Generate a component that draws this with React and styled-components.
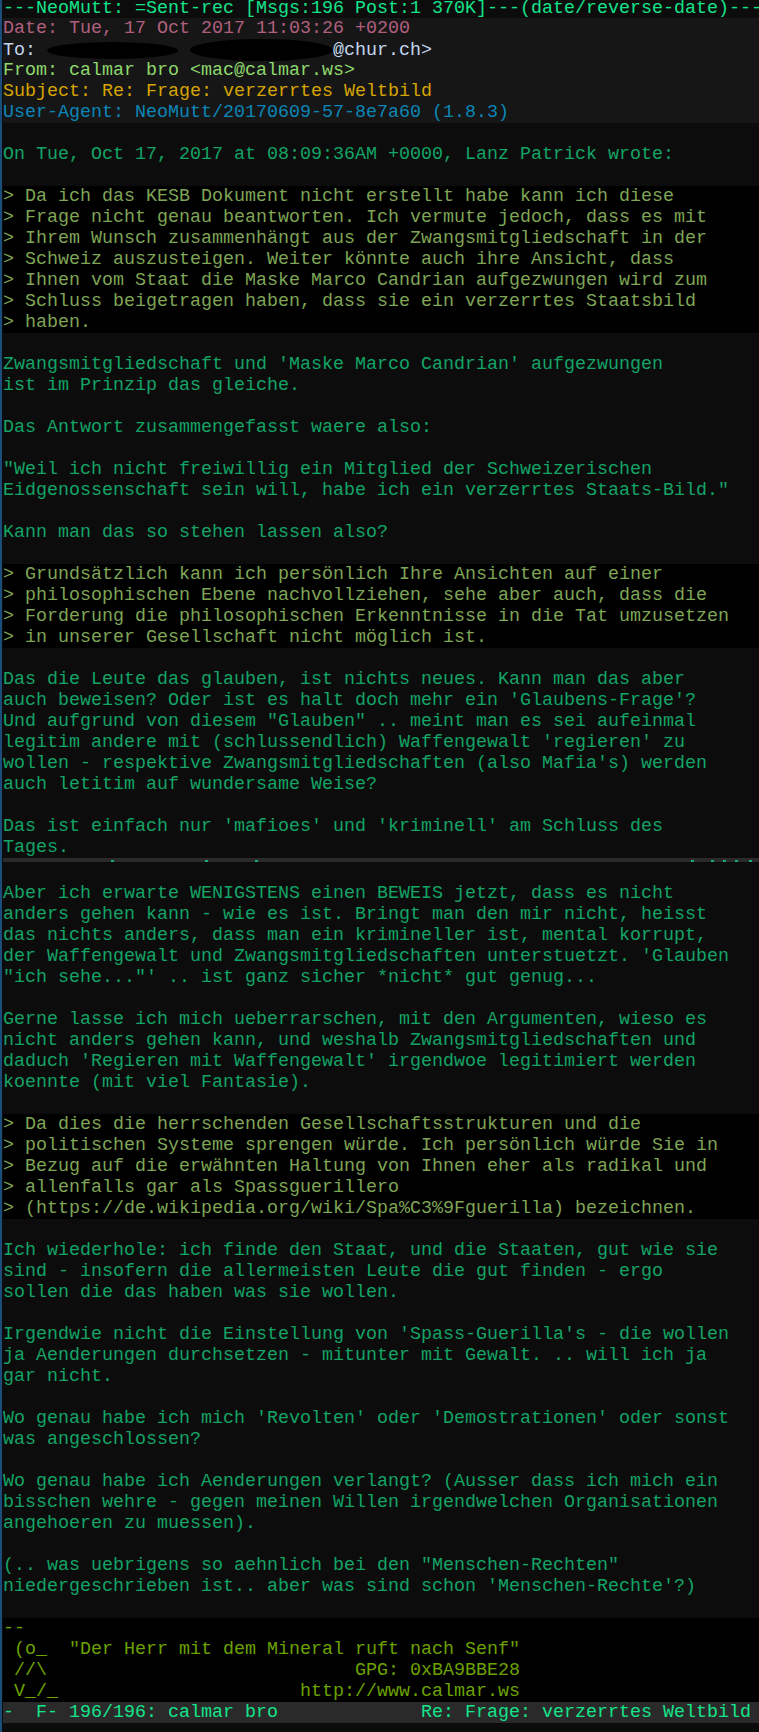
import React from 'react'
import styled, { createGlobalStyle } from 'styled-components'

const Global = createGlobalStyle`
  html, body {
    margin: 0;
    padding: 0;
    background: #0c0c0c;
  }
`

const tones = {
  bar: '#14e38a',
  date: '#b0607e',
  to: '#c2d6ee',
  from: '#8fd86c',
  subject: '#d6a400',
  agent: '#0b86b6',
  body: '#13a466',
  quote: '#7fa556',
  sig: '#6ca200',
}

const Screen = styled.div`
  width: 759px;
  height: 1732px;
  box-sizing: border-box;
  overflow: hidden;
  border-left: 2px solid #1b4c7a;
  padding-left: 1px;
  background: #0c0c0c;
  font-family: "Liberation Mono", "DejaVu Sans Mono", monospace;
  font-size: 18.33px;
  line-height: 21px;
`

const Line = styled.div`
  height: 21px;
  white-space: pre;
  color: ${p => tones[p.$tone]};
`

// first row of the terminal is cropped a little at the top
const TopBar = styled(Line)`
  height: 18px;
  line-height: 17px;
`

const Block = styled.div`
  background: ${p => p.$bg};
`

const StatusBar = styled(Line)`
  background: #2a2a2a;
  display: flex;
  justify-content: space-between;
  padding-right: 8px;
`

const CutBar = styled.div`
  height: 4px;
  background: #2a2a2a;
  svg { display: block; }
`

const Spacer = styled.div`
  height: 21px;
`

const Blot = styled.span`
  display: inline-block;
  vertical-align: middle;
  width: ${p => p.$w}px;
  height: ${p => p.$h}px;
  margin-left: ${p => p.$gap || 0}px;
  background: #000;
  border-radius: 50%;
`

const header = [
  ['date', 'Date: Tue, 17 Oct 2017 11:03:26 +0200'],
  ['from', 'From: calmar bro <mac@calmar.ws>'],
  ['subject', 'Subject: Re: Frage: verzerrtes Weltbild'],
  ['agent', 'User-Agent: NeoMutt/20170609-57-8e7a60 (1.8.3)'],
]

// top pager body: strings are body lines, arrays are quoted blocks
const topBody = [
  '',
  'On Tue, Oct 17, 2017 at 08:09:36AM +0000, Lanz Patrick wrote:',
  '',
  [
    '> Da ich das KESB Dokument nicht erstellt habe kann ich diese',
    '> Frage nicht genau beantworten. Ich vermute jedoch, dass es mit',
    '> Ihrem Wunsch zusammenhängt aus der Zwangsmitgliedschaft in der',
    '> Schweiz auszusteigen. Weiter könnte auch ihre Ansicht, dass',
    '> Ihnen vom Staat die Maske Marco Candrian aufgezwungen wird zum',
    '> Schluss beigetragen haben, dass sie ein verzerrtes Staatsbild',
    '> haben.',
  ],
  '',
  "Zwangsmitgliedschaft und 'Maske Marco Candrian' aufgezwungen",
  'ist im Prinzip das gleiche.',
  '',
  'Das Antwort zusammengefasst waere also:',
  '',
  '"Weil ich nicht freiwillig ein Mitglied der Schweizerischen',
  'Eidgenossenschaft sein will, habe ich ein verzerrtes Staats-Bild."',
  '',
  'Kann man das so stehen lassen also?',
  '',
  [
    '> Grundsätzlich kann ich persönlich Ihre Ansichten auf einer',
    '> philosophischen Ebene nachvollziehen, sehe aber auch, dass die',
    '> Forderung die philosophischen Erkenntnisse in die Tat umzusetzen',
    '> in unserer Gesellschaft nicht möglich ist.',
  ],
  '',
  'Das die Leute das glauben, ist nichts neues. Kann man das aber',
  "auch beweisen? Oder ist es halt doch mehr ein 'Glaubens-Frage'?",
  'Und aufgrund von diesem "Glauben" .. meint man es sei aufeinmal',
  "legitim andere mit (schlussendlich) Waffengewalt 'regieren' zu",
  "wollen - respektive Zwangsmitgliedschaften (also Mafia's) werden",
  'auch letitim auf wundersame Weise?',
  '',
  "Das ist einfach nur 'mafioes' und 'kriminell' am Schluss des",
  'Tages.',
]

const bottomBody = [
  'Aber ich erwarte WENIGSTENS einen BEWEIS jetzt, dass es nicht',
  'anders gehen kann - wie es ist. Bringt man den mir nicht, heisst',
  'das nichts anders, dass man ein krimineller ist, mental korrupt,',
  "der Waffengewalt und Zwangsmitgliedschaften unterstuetzt. 'Glauben",
  '"ich sehe..."\' .. ist ganz sicher *nicht* gut genug...',
  '',
  'Gerne lasse ich mich ueberrarschen, mit den Argumenten, wieso es',
  'nicht anders gehen kann, und weshalb Zwangsmitgliedschaften und',
  "daduch 'Regieren mit Waffengewalt' irgendwoe legitimiert werden",
  'koennte (mit viel Fantasie).',
  '',
  [
    '> Da dies die herrschenden Gesellschaftsstrukturen und die',
    '> politischen Systeme sprengen würde. Ich persönlich würde Sie in',
    '> Bezug auf die erwähnten Haltung von Ihnen eher als radikal und',
    '> allenfalls gar als Spassguerillero',
    '> (https://de.wikipedia.org/wiki/Spa%C3%9Fguerilla) bezeichnen.',
  ],
  '',
  'Ich wiederhole: ich finde den Staat, und die Staaten, gut wie sie',
  'sind - insofern die allermeisten Leute die gut finden - ergo',
  'sollen die das haben was sie wollen.',
  '',
  "Irgendwie nicht die Einstellung von 'Spass-Guerilla's - die wollen",
  'ja Aenderungen durchsetzen - mitunter mit Gewalt. .. will ich ja',
  'gar nicht.',
  '',
  "Wo genau habe ich mich 'Revolten' oder 'Demostrationen' oder sonst",
  'was angeschlossen?',
  '',
  'Wo genau habe ich Aenderungen verlangt? (Ausser dass ich mich ein',
  'bisschen wehre - gegen meinen Willen irgendwelchen Organisationen',
  'angehoeren zu muessen).',
  '',
  '(.. was uebrigens so aehnlich bei den "Menschen-Rechten"',
  "niedergeschrieben ist.. aber was sind schon 'Menschen-Rechte'?)",
  '',
]

// right-aligned to column 47, like the quote line
const signature = [
  '--',
  ' (o_  "Der Herr mit dem Mineral ruft nach Senf"',
  ' //\\'.padEnd(32) + 'GPG: 0xBA9BBE28',
  ' V_/_'.padEnd(27) + 'http://www.calmar.ws',
]

function Body({ lines }) {
  return lines.map((l, i) =>
    Array.isArray(l) ? (
      <Block key={i} $bg="#000">
        {l.map((q, j) => <Line key={j} $tone="quote">{q}</Line>)}
      </Block>
    ) : (
      <Line key={i} $tone="body">{l}</Line>
    )
  )
}

export default function App() {
  return (
    <Screen>
      <Global />
      <TopBar $tone="bar">---NeoMutt: =Sent-rec [Msgs:196 Post:1 370K]---(date/reverse-date)---</TopBar>
      <Block $bg="#161616">
        <Line $tone={header[0][0]}>{header[0][1]}</Line>
        <Line $tone="to">
          {'To: '}
          <Blot $w={131} $h={17} />
          <Blot $w={143} $h={22} $gap={12} />
          {'@chur.ch>'}
        </Line>
        {header.slice(1).map(([t, s]) => <Line key={t} $tone={t}>{s}</Line>)}
      </Block>
      <Body lines={topBody} />
      <CutBar>
        <svg width="756" height="4">
          {[108, 202, 252, 688, 708, 720, 732, 746].map(x => (
            <rect key={x} x={x} y="2" width="3" height="2" fill="#14e38a" opacity="0.7" />
          ))}
        </svg>
      </CutBar>
      <Spacer />
      <Body lines={bottomBody} />
      <Block $bg="#000">
        {signature.map((s, i) => <Line key={i} $tone="sig">{s}</Line>)}
      </Block>
      <StatusBar $tone="bar">
        <span>{'-  F- 196/196: calmar bro'}</span>
        <span>Re: Frage: verzerrtes Weltbild</span>
      </StatusBar>
    </Screen>
  )
}
